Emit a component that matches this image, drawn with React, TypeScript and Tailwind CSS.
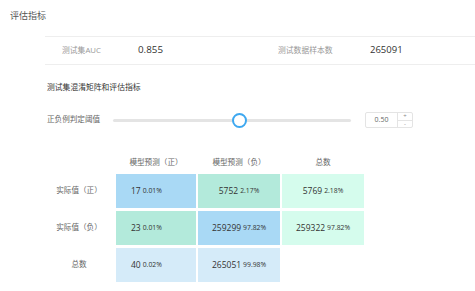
const cellColors = {
  blue: 'bg-[#a9d9f5]',
  green: 'bg-[#b3eadb]',
  mint: 'bg-[#d5fced]',
  sky: 'bg-[#d5ebf9]',
};

interface Cell {
  value: string;
  pct: string;
  color: string;
  left?: boolean;
}

const rows: Array<{ label: string; cells: Array<Cell | null> }> = [
  {
    label: '实际值（正）',
    cells: [
      { value: '17', pct: '0.01%', color: cellColors.blue, left: true },
      { value: '5752', pct: '2.17%', color: cellColors.green },
      { value: '5769', pct: '2.18%', color: cellColors.mint },
    ],
  },
  {
    label: '实际值（负）',
    cells: [
      { value: '23', pct: '0.01%', color: cellColors.green, left: true },
      { value: '259299', pct: '97.82%', color: cellColors.blue },
      { value: '259322', pct: '97.82%', color: cellColors.mint },
    ],
  },
  {
    label: '总数',
    cells: [
      { value: '40', pct: '0.02%', color: cellColors.sky, left: true },
      { value: '265051', pct: '99.98%', color: cellColors.sky },
      null,
    ],
  },
];

function MatrixCell({ cell }: { cell: Cell | null }) {
  if (!cell) return <div className="w-[82px]" />;
  return (
    <div
      className={`flex items-center h-full ${cell.color} ${
        cell.left ? 'w-[80px] pl-[15px]' : 'w-[82px] justify-center'
      }`}
    >
      <span className="text-[8.5px] text-[#333]">{cell.value}</span>
      <span className="text-[6.8px] text-[#333] ml-[2px]">{cell.pct}</span>
    </div>
  );
}

export default function App() {
  return (
    <div className="w-[475px] h-[291px] bg-white overflow-hidden font-['Open_Sans','Noto_Sans_CJK_SC',sans-serif]">
      {/* Title */}
      <div className="pt-[10px] pl-[10px] text-[9px] leading-[12px] text-[#555]">评估指标</div>

      {/* Summary row */}
      <div className="ml-[45px] mt-[14px] h-[29px] border-t border-b border-[#eeeeee] flex items-center">
        <span className="w-[93px] pl-[17px] text-[7.8px] text-[#999] whitespace-nowrap">测试集AUC</span>
        <span className="w-[140px] text-[9.8px] text-[#333]">0.855</span>
        <span className="w-[92px] text-[7.8px] text-[#999]">测试数据样本数</span>
        <span className="text-[9.5px] text-[#333]">265091</span>
      </div>

      {/* Section subtitle */}
      <div className="ml-[47px] mt-[17px] text-[7.8px] leading-[11px] text-[#333]">测试集混淆矩阵和评估指标</div>

      {/* Threshold slider */}
      <div className="ml-[47px] mt-[19px] h-[16px] flex items-center">
        <span className="w-[66px] text-[7.6px] text-[#666]">正负例判定阈值</span>
        <div className="relative w-[238px] h-[3px] bg-[#e4e4e4] rounded-full">
          <div className="absolute left-[119px] top-[-6px] w-[15px] h-[15px] rounded-full border-2 border-[#3ea8f0] bg-white" />
        </div>
        <div className="ml-[14px] w-[48px] h-[16px] flex border border-[#e4e4e4] rounded-[2px]">
          <div className="flex-1 flex items-center justify-center text-[7px] text-[#666]">0.50</div>
          <div className="w-[15px] flex flex-col border-l border-[#e4e4e4]">
            <div className="flex-1 flex items-center justify-center text-[6px] leading-none text-[#888] border-b border-[#e4e4e4]">+</div>
            <div className="flex-1 flex items-center justify-center text-[6px] leading-none text-[#888]">-</div>
          </div>
        </div>
      </div>

      {/* Confusion matrix */}
      <div className="ml-[44px] mt-[27px] flex flex-col gap-[3px]">
        <div className="flex h-[16px] items-center gap-[2px] text-[7.6px] text-[#666]">
          <div className="w-[70px]" />
          <div className="w-[80px] text-center">模型预测（正）</div>
          <div className="w-[82px] text-center">模型预测（负）</div>
          <div className="w-[82px] text-center">总数</div>
        </div>
        {rows.map((row) => (
          <div key={row.label} className="flex h-[34px] items-center gap-[2px]">
            <div className="w-[70px] text-center text-[7.6px] text-[#666]">{row.label}</div>
            {row.cells.map((cell, i) => (
              <MatrixCell key={i} cell={cell} />
            ))}
          </div>
        ))}
      </div>
    </div>
  );
}
